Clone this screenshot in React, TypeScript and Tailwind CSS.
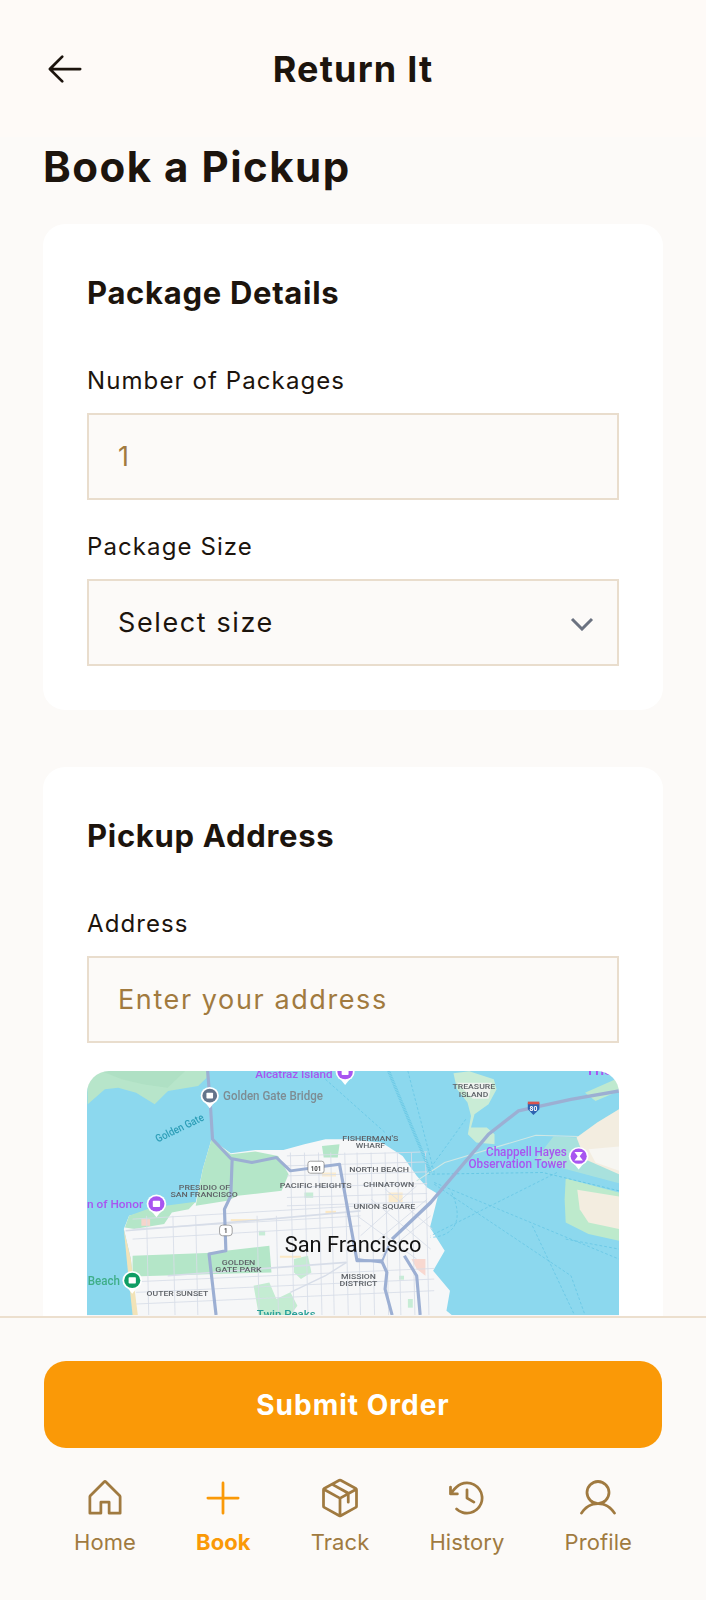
import React from "react";
import { PiArrowLeft, PiHouse, PiPlus, PiPackage, PiClockCounterClockwise, PiUser } from "react-icons/pi";

const ROAD = "#9cafd3";
const MINOR = "#d7dde8";
const PURPLE = "#a855f0";

function L({ x, y, w, s, t, fill = "#5f6368", weight = 500 }: { x: number; y: number; w: number; s: number; t: string; fill?: string; weight?: number }) {
  return (
    <text x={x} y={y} textLength={w} lengthAdjust="spacingAndGlyphs" fontSize={s} fill={fill} fontWeight={weight} fontFamily="Roboto, sans-serif">
      {t}
    </text>
  );
}

function Pin({ x, y, r, fill, children }: { x: number; y: number; r: number; fill: string; children?: React.ReactNode }) {
  return (
    <g>
      <path d={`M${x - r - 3} ${y + 6} L${x} ${y + r + 17} L${x + r + 3} ${y + 6} Z`} fill="#fff" />
      <circle cx={x} cy={y} r={r + 5} fill="#fff" />
      <circle cx={x} cy={y} r={r} fill={fill} />
      {children ?? <rect x={x - r * 0.45} y={y - r * 0.4} width={r * 0.9} height={r * 0.8} rx={2} fill="#fff" />}
    </g>
  );
}

function SfMap() {
  const hNorth = [290, 320, 350, 385, 415, 440];
  const hSouth = [470, 500, 530];
  const hSunset = [668, 700, 735];
  const vEast = [600, 640, 680, 715, 755, 790, 830, 870, 905, 945, 985];
  const vWest = [190, 265, 330, 505, 560];
  return (
    <svg viewBox="20 35 1517 733" preserveAspectRatio="none" width="532" height="244" className="block blur-[0.4px]">
      <rect x="20" y="35" width="1517" height="733" fill="#8cd8ee" />
      {/* Marin */}
      <path d="M20 35H362L361 55L337 80L251 95L213 135L160 100L109 85L71 90L22 135Z" fill="#b7e5ca" />
      <path d="M60 35H300L250 85L180 75L120 60Z" fill="#a8dcbd" opacity="0.5" />
      {/* Treasure Island */}
      <path d="M1065 42L1110 36L1180 60L1188 90L1165 135L1125 165L1115 205L1160 205L1182 225L1182 255L1130 250L1106 225L1115 170L1105 130L1075 90Z" fill="#c9ecd6" />
      <path d="M1075 70L1175 70L1165 118L1120 118Z" fill="#eef3ee" />
      {/* East bay */}
      <path d="M1440 100L1537 55V95L1470 125Z" fill="#bfe9cf" />
      <path d="M1537 150L1475 190L1416 235L1350 232L1300 300L1387 330L1537 372Z" fill="#bfe9cf" opacity="0.55" />
      <path d="M1537 150L1475 190L1416 235L1440 300L1537 345Z" fill="#f3ede0" />
      <path d="M1450 270L1537 262V335L1470 310Z" fill="#f7f6f2" />
      <path d="M1385 358L1537 400V545L1450 525L1385 490L1382 420Z" fill="#bdeacc" />
      <path d="M1418 392L1537 412V510L1450 490L1425 450Z" fill="#f3ede0" />
      {/* City */}
      <path d="M375 240L430 282L500 272L580 272L640 255L700 240L760 240L860 250L920 290L960 350L990 385L1022 405L998 505L1040 575L1007 635L1055 695L1045 755L1060 768H160L145 600L125 510L140 470L260 440L330 430L350 330Z" fill="#f6f7f8" />
      {/* Green */}
      <path d="M375 240L430 285L500 277L565 290L595 345L575 395L450 410L420 425L330 440L350 330Z" fill="#b4e6c8" />
      <path d="M128 505L140 470L205 445L330 428L310 450L262 460L240 495L155 510Z" fill="#b4e6c8" />
      <path d="M150 590L360 582L540 560L546 640L150 652Z" fill="#b4e6c8" />
      <path d="M690 260L740 255L735 295L695 295Z" fill="#b4e6c8" />
      <path d="M610 600L650 590L660 640L630 660L610 640Z" fill="#c4ecd2" />
      <path d="M495 680L540 670L560 720L600 700L620 740L600 768H510Z" fill="#c4ecd2" />
      <path d="M175 480H200V500H175Z" fill="#f5d5cc" />
      <path d="M945 600H985V650L960 630Z" fill="#f8d8d0" />
      <rect x="640" y="400" width="25" height="16" fill="#c7ecd6" />
      <rect x="510" y="515" width="18" height="14" fill="#c7ecd6" />
      <rect x="910" y="650" width="14" height="12" fill="#c7ecd6" />
      <rect x="935" y="720" width="14" height="26" fill="#c7ecd6" />
      <rect x="700" y="455" width="30" height="8" fill="#fbe8c4" />
      <rect x="430" y="480" width="80" height="6" fill="#fbe8c4" />
      <rect x="570" y="590" width="60" height="6" fill="#fbe8c4" />
      <rect x="880" y="400" width="40" height="30" fill="#fbeccf" />
      <rect x="690" y="340" width="40" height="12" fill="#fbeccf" />
      {/* Beach */}
      <path d="M125 510L145 600L165 768H150L135 620Z" fill="#f2e3b8" />
      {/* Streets */}
      <g stroke={MINOR} strokeWidth="2.5" fill="none">
        {hNorth.map((y) => (
          <path key={y} d={`M590 ${y}L990 ${y - 12}`} />
        ))}
        {hSouth.map((y) => (
          <path key={y} d={`M150 ${y + 10}L800 ${y - 30}`} />
        ))}
        {hSunset.map((y) => (
          <path key={y} d={`M160 ${y}L1010 ${y - 40}`} />
        ))}
        {vEast.map((x) => (
          <path key={x} d={`M${x} 280L${x + 10} 768`} />
        ))}
        {vWest.map((x) => (
          <path key={x} d={`M${x} 470L${x + 6} 768`} />
        ))}
        <path d="M800 530L960 380M830 560L990 420M860 590L1000 470M790 470L960 600M830 420L1000 570M870 390L1005 510" />
        <path d="M130 515L540 480L800 455" strokeWidth="5" />
        <path d="M250 650L760 610" strokeWidth="5" />
        <path d="M600 700L700 650L760 610" strokeWidth="4" />
      </g>
      {/* Shipping lanes */}
      <g stroke="#5fc3e3" strokeWidth="2" strokeDasharray="8 6" fill="none">
        <path d="M935 35L1010 340M1100 180L990 340M700 60L870 220" />
        <path d="M1010 375L1400 650L1440 768M1010 370L1537 600M1360 340L1000 530M1385 540L1537 570M1290 500L1410 768M1060 400C1090 470 1080 530 1000 535" />
        <path d="M990 345L1320 340L1537 395" stroke="#54bfe0" />
      </g>
      <path d="M960 365L1040 310L1300 228L1420 232" stroke="#cfe7e4" strokeWidth="3" fill="none" />
      <path d="M880 35L1000 340" stroke="#6cc9e5" strokeWidth="9" strokeDasharray="3 2" fill="none" />
      {/* Highways */}
      <g stroke={ROAD} fill="none" strokeLinejoin="round">
        <path d="M364 35L372 140L378 240L430 298L490 310L560 295L600 335L740 315L790 605L860 605L875 640L870 690L890 768" strokeWidth="9" />
        <path d="M434 298L430 410L412 450L416 575L368 585L388 768" strokeWidth="9" />
        <path d="M890 540L1000 430L1165 225L1250 155L1400 120L1537 95" strokeWidth="10" />
        <path d="M925 590L960 650L970 768" strokeWidth="9" />
        <path d="M790 600L860 610L880 560" strokeWidth="6" />
      </g>
      {/* Shields */}
      <rect x="650" y="306" width="46" height="36" rx="7" fill="#fff" stroke="#777" strokeWidth="2" />
      <L x={658} y={335} w={30} s={24} t="101" fill="#444" weight={700} />
      <rect x="398" y="498" width="36" height="32" rx="9" fill="#fff" stroke="#777" strokeWidth="2" />
      <L x={411} y={522} w={10} s={22} t="1" fill="#444" weight={700} />
      <path d="M1277 132H1310V150L1293 167L1277 150Z" fill="#2e62b0" />
      <rect x="1277" y="127" width="33" height="8" fill="#d9534f" />
      <L x={1282} y={156} w={22} s={20} t="80" fill="#fff" weight={700} />
      {/* Labels */}
      <L x={500} y={56} w={220} s={34} t="Alcatraz Island" fill={PURPLE} />
      <Pin x={756} y={38} r={22} fill={PURPLE} />
      <Pin x={370} y={109} r={21} fill="#64748b" />
      <L x={408} y={122} w={285} s={36} t="Golden Gate Bridge" fill="#7d8c93" />
      <g transform="rotate(-27 222 250)">
        <L x={222} y={250} w={150} s={32} t="Golden Gate" fill="#2f9fb8" />
      </g>
      <L x={1062} y={90} w={122} s={22} t="TREASURE" />
      <L x={1080} y={113} w={84} s={22} t="ISLAND" />
      <L x={748} y={244} w={160} s={22} t="FISHERMAN'S" />
      <L x={786} y={266} w={84} s={22} t="WHARF" />
      <L x={768} y={338} w={170} s={23} t="NORTH BEACH" />
      <L x={570} y={386} w={205} s={23} t="PACIFIC HEIGHTS" />
      <L x={808} y={384} w={145} s={23} t="CHINATOWN" />
      <L x={780} y={449} w={176} s={23} t="UNION SQUARE" />
      <L x={282} y={392} w={146} s={23} t="PRESIDIO OF" />
      <L x={258} y={415} w={192} s={23} t="SAN FRANCISCO" />
      <L x={1158} y={290} w={230} s={36} t="Chappell Hayes" fill={PURPLE} />
      <L x={1108} y={325} w={280} s={36} t="Observation Tower" fill={PURPLE} />
      <Pin x={1422} y={291} r={23} fill={PURPLE}>
        <path d="M1410 278H1434L1425 291L1434 304H1410L1419 291Z" fill="#fff" />
      </Pin>
      <L x={20} y={447} w={160} s={35} t="n of Honor" fill={PURPLE} />
      <Pin x={218} y={434} r={23} fill={PURPLE} />
      <L x={22} y={678} w={92} s={36} t="Beach" fill="#3fae88" />
      <Pin x={149} y={664} r={23} fill="#0f9d64" />
      <L x={404} y={618} w={96} s={23} t="GOLDEN" />
      <L x={386} y={640} w={132} s={23} t="GATE PARK" />
      <L x={190} y={711} w={176} s={23} t="OUTER SUNSET" />
      <L x={744} y={659} w={100} s={23} t="MISSION" />
      <L x={740} y={682} w={108} s={23} t="DISTRICT" />
      <L x={504} y={778} w={168} s={33} t="Twin Peaks" fill="#2aa198" />
      <L x={1440} y={48} w={80} s={28} t="The" fill={PURPLE} />
      <L x={584} y={578} w={390} s={64} t="San Francisco" fill="#111" weight={400} />
    </svg>
  );
}

function Label({ children }: { children: React.ReactNode }) {
  return <div className="text-[24px] leading-[32px] tracking-[1.1px] text-[#1c140d]">{children}</div>;
}

function Box({ children, dark }: { children: React.ReactNode; dark?: boolean }) {
  return (
    <div className={`mt-[16px] flex h-[87px] items-center justify-between border-2 border-[#e9ddcd] bg-[#fcfaf8] px-[29px] pt-[2px] text-[27px] tracking-[1.6px] ${dark ? "text-[#1c140d]" : "text-[#a17a3f]"}`}>
      {children}
    </div>
  );
}

function NavItem({ icon, label, active }: { icon: React.ReactNode; label: string; active?: boolean }) {
  return (
    <div className={`flex flex-col items-center ${active ? "text-[#fa9907]" : "text-[#a07a40]"}`}>
      <div className="text-[44px] leading-none">{icon}</div>
      <div className={`mt-[7px] text-[22px] leading-[30px] tracking-[0.1px] ${active ? "font-bold" : ""}`}>{label}</div>
    </div>
  );
}

export default function App() {
  return (
    <div className="flex h-[1600px] w-[706px] flex-col overflow-hidden bg-[#fcfaf8] font-['Inter',sans-serif] text-[#1c140d]">
      <header className="relative flex h-[137px] shrink-0 items-center justify-center bg-[#fefaf7]">
        <PiArrowLeft className="absolute left-[43px] top-[47px] text-[44px]" />
        <h1 className="text-[36px] font-bold tracking-[1.2px]">Return It</h1>
      </header>
      <main className="min-h-0 flex-1 overflow-hidden px-[43px]">
        <h2 className="h-[58px] text-[42px] font-bold leading-[60px] tracking-[1.5px]">Book a Pickup</h2>
        <section className="mt-[29px] rounded-[22px] bg-white p-[44px]">
          <h3 className="text-[31px] font-bold leading-[50px] tracking-[0.7px]">Package Details</h3>
          <div className="mt-[47px]">
            <Label>Number of Packages</Label>
            <Box>1</Box>
          </div>
          <div className="mt-[31px]">
            <Label>Package Size</Label>
            <Box dark>
              Select size
              <svg width="24" height="14" viewBox="0 0 24 14" fill="none" className="mr-[-6px]">
                <path d="M2 2L12 12L22 2" stroke="#6b7280" strokeWidth="3" />
              </svg>
            </Box>
          </div>
        </section>
        <section className="mt-[57px] rounded-[22px] bg-white p-[44px]">
          <h3 className="text-[31px] font-bold leading-[50px] tracking-[0.7px]">Pickup Address</h3>
          <div className="mt-[47px]">
            <Label>Address</Label>
            <Box>Enter your address</Box>
          </div>
          <div className="mt-[28px] h-[300px] overflow-hidden rounded-[22px] bg-[#f6f7f8]">
            <SfMap />
          </div>
        </section>
      </main>
      <footer className="h-[284px] shrink-0 border-t-2 border-[#ecdfce] bg-[#fcfaf8] px-[44px] pt-[43px]">
        <button className="block h-[87px] w-full rounded-[22px] bg-[#fa9907] text-[28px] font-bold tracking-[1px] text-white">Submit Order</button>
        <nav className="mt-[28px] flex justify-around">
          <NavItem icon={<PiHouse />} label="Home" />
          <NavItem icon={<PiPlus />} label="Book" active />
          <NavItem icon={<PiPackage />} label="Track" />
          <NavItem icon={<PiClockCounterClockwise />} label="History" />
          <NavItem icon={<PiUser />} label="Profile" />
        </nav>
      </footer>
    </div>
  );
}
